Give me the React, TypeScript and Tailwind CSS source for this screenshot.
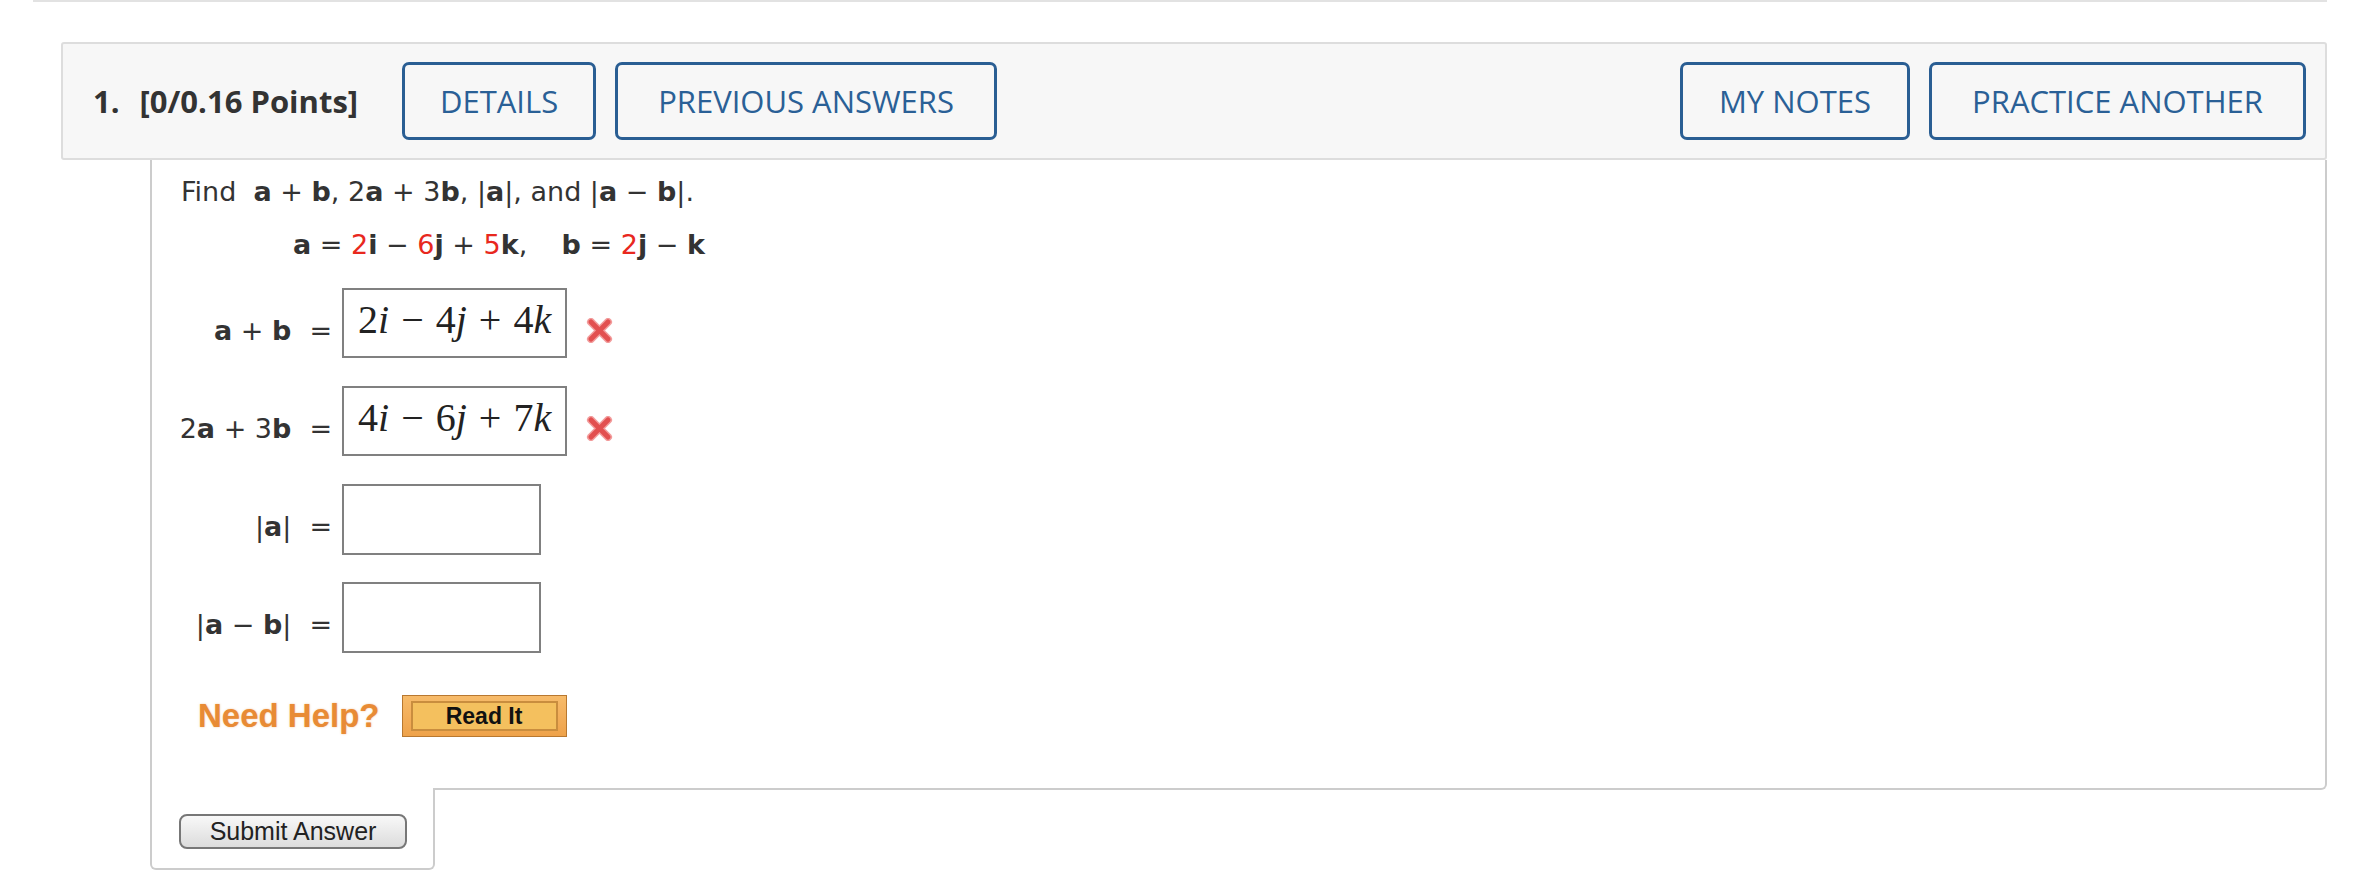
import React from 'react';

const blueBtn =
  "h-[78px] border-[3px] border-[#2a5e93] rounded-[7px] text-[#2a6096] text-[31px] font-medium flex items-center justify-center bg-[#f7f7f7]";

function Cross() {
  return (
    <svg width="27" height="25" viewBox="0 0 27 25" className="block">
      <g stroke="#f29b9b" strokeWidth="8" strokeLinecap="round">
        <line x1="5" y1="4" x2="22" y2="21" />
        <line x1="22" y1="4" x2="5" y2="21" />
      </g>
      <g stroke="#e24f4f" strokeWidth="5" strokeLinecap="round">
        <line x1="5" y1="4" x2="22" y2="21" />
        <line x1="22" y1="4" x2="5" y2="21" />
      </g>
    </svg>
  );
}

function Op({ children }: { children: React.ReactNode }) {
  return <span className="mx-[12px] not-italic">{children}</span>;
}

function B({ children }: { children: React.ReactNode }) {
  return <span className="font-bold">{children}</span>;
}

function Red({ children }: { children: React.ReactNode }) {
  return <span className="text-[#e8281e]">{children}</span>;
}

function AnswerRow({
  label,
  answer,
  wide,
}: {
  label: React.ReactNode;
  answer?: React.ReactNode;
  wide?: boolean;
}) {
  return (
    <div className="flex items-start h-[70px]">
      <div className="w-[151px] flex justify-end pt-[27px] whitespace-pre">
        <span>{label}</span>
        <span className="ml-[18px]">=</span>
      </div>
      <div
        className={`ml-[10px] border-2 border-[#808080] bg-white flex items-center pl-[14px] ${
          wide ? 'w-[225px] h-[70px]' : 'w-[199px] h-[71px]'
        }`}
      >
        {answer}
      </div>
      {answer && (
        <div className="ml-[19px] pt-[30px]">
          <Cross />
        </div>
      )}
    </div>
  );
}

function Math({ parts }: { parts: [string, string, string, string, string, string] }) {
  const [c1, v1, c2, v2, c3, v3] = parts;
  return (
    <span className="text-[40px] leading-none text-[#222] pb-[6px]" style={{ fontFamily: '"Liberation Serif", serif' }}>
      {c1}
      <i>{v1}</i>
      <Op>−</Op>
      {c2}
      <i>{v2}</i>
      <Op>+</Op>
      {c3}
      <i>{v3}</i>
    </span>
  );
}

export default function App() {
  return (
    <div className="min-h-screen bg-white pb-[15px]">
      <div className="ml-[33px] w-[2294px] h-[2px] bg-[#e2e2e2]" />

      <div className="ml-[61px] w-[2266px] pt-[40px]">
        {/* Question header */}
        <div
          className="h-[118px] border-2 border-[#dddddd] bg-[#f7f7f7] rounded-[3px] flex items-center pl-[30px] pr-[19px]"
          style={{ fontFamily: '"Open Sans", sans-serif' }}
        >
          <span className="text-[31px] font-bold text-[#333]">1.</span>
          <span className="ml-[20px] text-[31px] font-bold text-[#333]">[0/0.16 Points]</span>
          <button className={`${blueBtn} ml-[44px] w-[194px]`}>DETAILS</button>
          <button className={`${blueBtn} ml-[19px] w-[382px]`}>PREVIOUS ANSWERS</button>
          <div className="flex-1" />
          <button className={`${blueBtn} w-[230px]`}>MY NOTES</button>
          <button className={`${blueBtn} ml-[19px] w-[377px]`}>PRACTICE ANOTHER</button>
        </div>

        {/* Question body */}
        <div className="ml-[89px]">
          <div
            className="border-l-2 border-r-2 border-b-2 border-[#cccccc] rounded-br-[6px] pl-[29px] pt-[16px] pb-[51px] text-[27px] leading-[32px] text-[#333]"
            style={{ fontFamily: '"DejaVu Sans", Verdana, sans-serif' }}
          >
            <p className="whitespace-pre">
              Find  <B>a</B> + <B>b</B>, 2<B>a</B> + 3<B>b</B>, |<B>a</B>|, and |<B>a</B> − <B>b</B>|.
            </p>
            <p className="whitespace-pre mt-[21px] ml-[112px]">
              <B>a</B> = <Red>2</Red><B>i</B> − <Red>6</Red><B>j</B> + <Red>5</Red><B>k</B>,    <B>b</B> ={' '}
              <Red>2</Red><B>j</B> − <B>k</B>
            </p>

            <div className="mt-[27px] flex flex-col gap-[28px]">
              <AnswerRow
                wide
                label={
                  <>
                    <B>a</B> + <B>b</B>
                  </>
                }
                answer={<Math parts={['2', 'i', '4', 'j', '4', 'k']} />}
              />
              <AnswerRow
                wide
                label={
                  <>
                    2<B>a</B> + 3<B>b</B>
                  </>
                }
                answer={<Math parts={['4', 'i', '6', 'j', '7', 'k']} />}
              />
              <AnswerRow
                label={
                  <>
                    |<B>a</B>|
                  </>
                }
              />
              <AnswerRow
                label={
                  <>
                    |<B>a</B> − <B>b</B>|
                  </>
                }
              />
            </div>

            <div className="mt-[43px] flex items-center" style={{ fontFamily: '"Liberation Sans", Arial, sans-serif' }}>
              <span className="ml-[17px] text-[33px] font-bold text-[#e88b35] [text-shadow:0_0_2px_rgba(232,139,53,0.5)]">
                Need Help?
              </span>
              <button className="ml-[22px] w-[165px] h-[42px] border border-[#b87830] bg-gradient-to-b from-[#f7bb6a] to-[#eea24a] px-[8px] py-[5px]">
                <span className="flex h-full items-center justify-center border-2 border-[#c98d3e] bg-[#f4c05e] text-[23px] font-bold text-[#111] leading-none">
                  Read It
                </span>
              </button>
            </div>
          </div>

          <div className="-mt-[2px] w-[285px] h-[82px] bg-white border-l-2 border-r-2 border-b-2 border-[#cccccc] rounded-b-[6px] pl-[27px] pt-[26px] relative">
            <button
              className="w-[228px] h-[35px] rounded-[8px] border-2 border-[#777] bg-gradient-to-b from-[#f8f8f8] to-[#dcdcdc] text-[25px] leading-none text-[#222]"
              style={{ fontFamily: '"Liberation Sans", Arial, sans-serif' }}
            >
              Submit Answer
            </button>
          </div>
        </div>
      </div>
    </div>
  );
}
